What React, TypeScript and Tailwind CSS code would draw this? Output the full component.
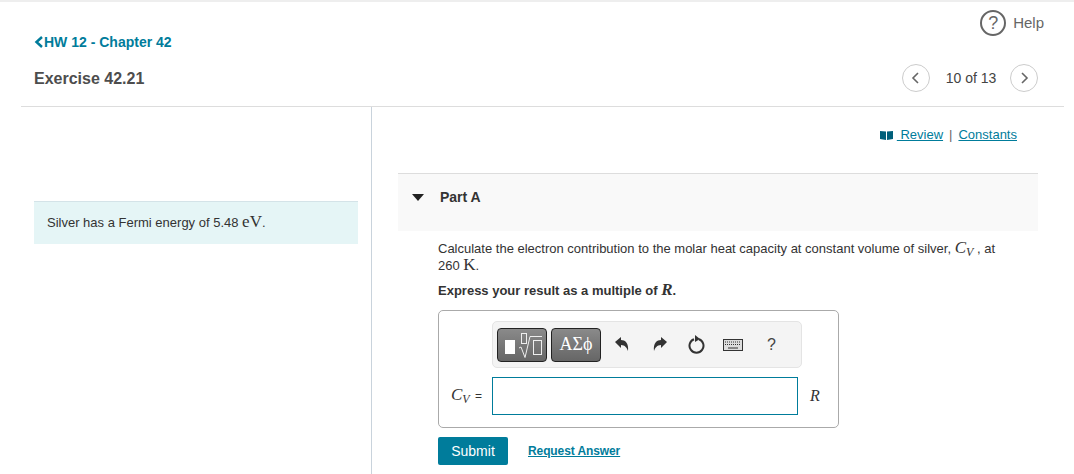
import * as React from "react";

function NavButton({ d }: { d: string }) {
	return (
		<button className="flex items-center justify-center w-[28px] h-[28px] rounded-full border border-[#ccc] bg-white">
			<svg width="12" height="14" viewBox="0 0 12 14" fill="none" stroke="#666" strokeWidth="1.600">
				<path d={d} />
			</svg>
		</button>
	);
}

function Cv() {
	return (
		<span className="font-['Liberation_Serif',serif] italic text-[17px] leading-[16px]">
			C<sub className="text-[12px] align-baseline relative top-[3px] leading-[0]">V</sub>
		</span>
	);
}

function Toolbar() {
	return (
		<div className="flex items-center h-[47px] w-[310px] ml-[53px] rounded-[5px] border border-[#e4e4e4] bg-[#f4f4f4] pl-[4px]">
			<div className="flex items-end gap-[3px] w-[50px] h-[34px] rounded-[4px] border border-[#222] bg-gradient-to-b from-[#8a8a8a] to-[#666] pl-[7px] pb-[2px]">
				<span className="w-[10px] h-[14px] mb-[5px] bg-white" />
				<svg width="25" height="27" viewBox="0 0 25 27" fill="none" stroke="#eee" strokeWidth="1">
					<rect x="3.500" y="1.500" width="5" height="10" />
					<path d="M1 16l2-1 4 10.500L12 4.500h12" />
					<rect x="15.500" y="8.500" width="8" height="14" />
				</svg>
			</div>
			<div className="flex items-center justify-center w-[50px] h-[34px] ml-[4px] rounded-[4px] border border-[#222] bg-gradient-to-b from-[#8a8a8a] to-[#666] text-white text-[18px] font-['Liberation_Serif',serif]">
				ΑΣϕ
			</div>
			<svg className="ml-[14px]" width="14" height="15" viewBox="0 0 14 15" fill="#333">
				<path d="M0 5l6-5v3c4 0 8 3 7 11-1-3-3-6-7-6v3z" />
			</svg>
			<svg className="ml-[24px]" width="14" height="15" viewBox="0 0 14 15" fill="#333">
				<path d="M14 5L8 0v3C4 3 0 6 1 14c1-3 3-6 7-6v3z" />
			</svg>
			<svg className="ml-[21px]" width="17" height="19" viewBox="0 0 17 19" fill="none" stroke="#333" strokeWidth="2">
				<path d="M6 4.200a7 7 0 1 0 5 0" />
				<path d="M7 0l5 4-5 3z" fill="#333" stroke="none" />
			</svg>
			<svg className="ml-[18px]" width="20" height="12" viewBox="0 0 20 12" fill="#ddd" stroke="#333" strokeWidth="1">
				<rect x="0.500" y="0.500" width="19" height="11" />
				<path d="M2 3h16M2 5.500h16" strokeDasharray="1 1" />
				<path d="M5 9h10" />
			</svg>
			<span className="ml-[24px] text-[16px] text-[#444]">?</span>
		</div>
	);
}

export default function App() {
	return (
		<div className="flex flex-col w-[1074px] h-[474px] overflow-hidden bg-white border-t-2 border-[#eee] font-['Liberation_Sans',sans-serif] text-[#333]">
			<div className="flex shrink-0 items-center justify-end h-[40px] pt-[2px] pr-[30px] gap-[7px]">
				<span className="flex items-center justify-center w-[26px] h-[26px] rounded-full border-2 border-[#666] text-[#666] text-[18px]">?</span>
				<span className="text-[15px] text-[#666]">Help</span>
			</div>
			<div className="flex shrink-0 items-center pl-[34px] h-[20px] -mt-[10px] text-[14px] font-bold text-[#007c9b]">
				<svg width="10" height="12" viewBox="0 0 10 12" fill="none" stroke="#007c9b" strokeWidth="2.500">
					<path d="M8 1L2.500 6 8 11" />
				</svg>
				<span>HW 12 - Chapter 42</span>
			</div>
			<div className="flex shrink-0 items-center justify-between h-[28px] mt-[12px] pl-[34px] pr-[36px]">
				<span className="text-[16px] font-bold text-[#4d4d4d] pt-[1px]">Exercise 42.21</span>
				<div className="flex items-center">
					<NavButton d="M8 2L3 7l5 5" />
					<span className="w-[80px] pl-[2px] text-center text-[14px] text-[#444]">10 of 13</span>
					<NavButton d="M4 2l5 5-5 5" />
				</div>
			</div>
			<div className="flex flex-1 ml-[21px] mr-[10px] mt-[14px] border-t border-[#ddd]">
				<div className="w-[351px] pt-[94px] pl-[13px] pr-[13px] border-r border-[#c9d3dc]">
					<div className="flex items-center h-[43px] pl-[13px] bg-[#e5f5f6] border-t border-[#d4e3e8] text-[13px] w-[324px]">
						<span>
							Silver has a Fermi energy of 5.48 <span className="font-['Liberation_Serif',serif] text-[17px] leading-[16px]">eV</span>.
						</span>
					</div>
				</div>
				<div className="flex-1 pl-[26px] pr-[26px] text-[13px]">
					<div className="flex items-center justify-end h-[55px] pr-[21px] text-[#007c9b]">
						<svg className="mr-[4px]" width="13" height="10" viewBox="0 0 13 10" fill="#005f7a">
							<path d="M0 1l6 .500V10L0 9zM13 1l-6 .500V10l6-1z" />
						</svg>
						<a className="underline whitespace-pre"> Review</a>
						<span className="mx-[6px] text-[#666]">|</span>
						<a className="underline">Constants</a>
					</div>
					<div className="h-[58px] mt-[11px] bg-[#f9f9f9] border-t border-[#ddd] flex pt-[13px] text-[14px] font-bold">
						<svg className="ml-[14px] mt-[7px]" width="12" height="7" viewBox="0 0 12 7" fill="#222">
							<path d="M0 0h12L6 7z" />
						</svg>
						<span className="ml-[16px]">Part A</span>
					</div>
					<div className="pl-[40px] pt-[9px] pr-[40px] leading-[16px] text-[#333]">
						<p>
							Calculate the electron contribution to the molar heat capacity at constant volume of silver, <Cv /> , at
							<br />
							260 <span className="font-['Liberation_Serif',serif] text-[17px] leading-[16px]">K</span>.
						</p>
						<p className="mt-[8px] font-bold">
							Express your result as a multiple of <span className="font-['Liberation_Serif',serif] italic text-[17px] leading-[16px]">R</span>.
						</p>
					</div>
					<div className="ml-[40px] mt-[11px] w-[401px] h-[118px] rounded-[5px] border border-[#aaa] pt-[10px]">
						<Toolbar />
						<div className="flex items-center mt-[9px] h-[38px]">
							<div className="w-[53px] pl-[12px] whitespace-nowrap text-[12px]">
								<Cv /> <span className="ml-[2px]">=</span>
							</div>
							<div className="w-[306px] h-[38px] border border-[#007c9b] bg-white" />
							<span className="ml-[12px] font-['Liberation_Serif',serif] italic text-[16px]">R</span>
						</div>
					</div>
					<div className="flex items-center ml-[40px] mt-[9px]">
						<button className="w-[70px] h-[28px] rounded-[2px] bg-[#007c9b] text-white text-[14px]">Submit</button>
						<a className="ml-[20px] text-[12px] font-bold underline text-[#007c9b] tracking-[-0.1px]">Request Answer</a>
					</div>
				</div>
			</div>
		</div>
	);
}
